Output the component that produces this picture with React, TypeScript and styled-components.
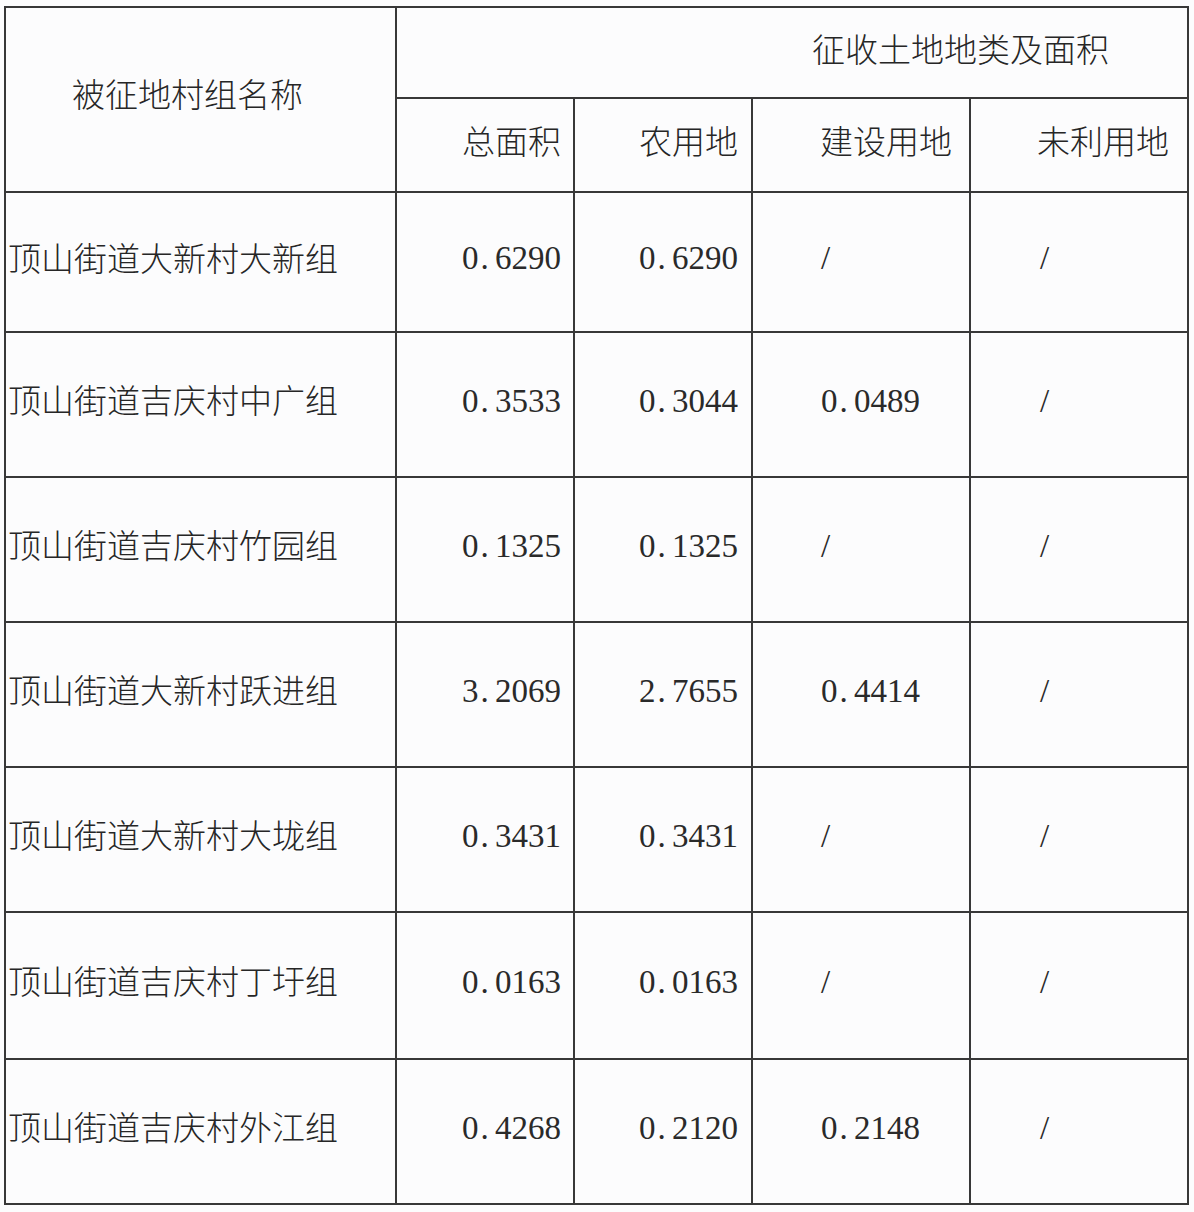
import React from "react";
import styled, { createGlobalStyle } from "styled-components";

const GlobalStyle = createGlobalStyle`
	html, body {
		margin: 0;
		padding: 0;
		background: #fcfcfd;
	}
`;

type Align = "left" | "right" | "center";

interface RowData {
	name: string;
	total: string;
	farm: string;
	build: string;
	unused: string;
	height: number;
}

const rows: RowData[] = [
	{ name: "顶山街道大新村大新组", total: "0.6290", farm: "0.6290", build: "/", unused: "/", height: 140 },
	{ name: "顶山街道吉庆村中广组", total: "0.3533", farm: "0.3044", build: "0.0489", unused: "/", height: 145 },
	{ name: "顶山街道吉庆村竹园组", total: "0.1325", farm: "0.1325", build: "/", unused: "/", height: 145 },
	{ name: "顶山街道大新村跃进组", total: "3.2069", farm: "2.7655", build: "0.4414", unused: "/", height: 145 },
	{ name: "顶山街道大新村大垅组", total: "0.3431", farm: "0.3431", build: "/", unused: "/", height: 145 },
	{ name: "顶山街道吉庆村丁圩组", total: "0.0163", farm: "0.0163", build: "/", unused: "/", height: 147 },
	{ name: "顶山街道吉庆村外江组", total: "0.4268", farm: "0.2120", build: "0.2148", unused: "/", height: 145 },
];

const Page = styled.div`
	padding: 6px 0 0 4px;
`;

const Table = styled.table`
	border-collapse: collapse;
	table-layout: fixed;
	width: 1185px;
	color: #262626;
`;

const Row = styled.tr<{ $h: number }>`
	height: ${(p) => p.$h}px;
`;

const Cell = styled.td<{ $align?: Align; $pl?: number; $pr?: number; $pb?: number }>`
	border: 2px solid #383838;
	padding: 0 ${(p) => p.$pr ?? 0}px ${(p) => p.$pb ?? 10}px ${(p) => p.$pl ?? 0}px;
	text-align: ${(p) => p.$align ?? "left"};
	vertical-align: middle;
	font-family: "Noto Sans CJK SC", "Noto Sans", sans-serif;
	font-size: 33px;
	font-weight: 300;
	line-height: 1;
	white-space: nowrap;
	overflow: hidden;
`;

/* half-width serif digits, the decimal point takes a full digit slot */
const Num = styled.span`
	font-family: "Liberation Serif", "DejaVu Serif", serif;
	font-size: 33px;
	font-weight: 400;
	color: #2a2a2a;
`;

const Dot = styled.span`
	display: inline-block;
	width: 0.5em;
	padding-left: 2px;
	box-sizing: border-box;
	text-align: left;
`;

const Value: React.FC<{ value: string }> = ({ value }) => {
	const [whole, frac] = value.split(".");
	if (frac === undefined) return <Num>{value}</Num>;
	return (
		<Num>
			{whole}
			<Dot>.</Dot>
			{frac}
		</Num>
	);
};

const App: React.FC = () => {
	return (
		<Page>
			<GlobalStyle />
			<Table>
				<colgroup>
					<col style={{ width: 391 }} />
					<col style={{ width: 178 }} />
					<col style={{ width: 178 }} />
					<col style={{ width: 218 }} />
					<col style={{ width: 218 }} />
				</colgroup>
				<thead>
					<Row $h={91}>
						<Cell rowSpan={2} $align="center" $pr={26} $pb={12}>
							被征地村组名称
						</Cell>
						<Cell colSpan={4} $align="right" $pr={78} $pb={8}>
							征收土地地类及面积
						</Cell>
					</Row>
					<Row $h={94}>
						<Cell $align="right" $pr={12}>总面积</Cell>
						<Cell $align="right" $pr={13}>农用地</Cell>
						<Cell $pl={67}>建设用地</Cell>
						<Cell $pl={66}>未利用地</Cell>
					</Row>
				</thead>
				<tbody>
					{rows.map((r) => (
						<Row key={r.name} $h={r.height}>
							<Cell $pl={2}>{r.name}</Cell>
							<Cell $align="right" $pr={12}>
								<Value value={r.total} />
							</Cell>
							<Cell $align="right" $pr={13}>
								<Value value={r.farm} />
							</Cell>
							<Cell $pl={68}>
								<Value value={r.build} />
							</Cell>
							<Cell $pl={69}>
								<Value value={r.unused} />
							</Cell>
						</Row>
					))}
				</tbody>
			</Table>
		</Page>
	);
};

export default App;
